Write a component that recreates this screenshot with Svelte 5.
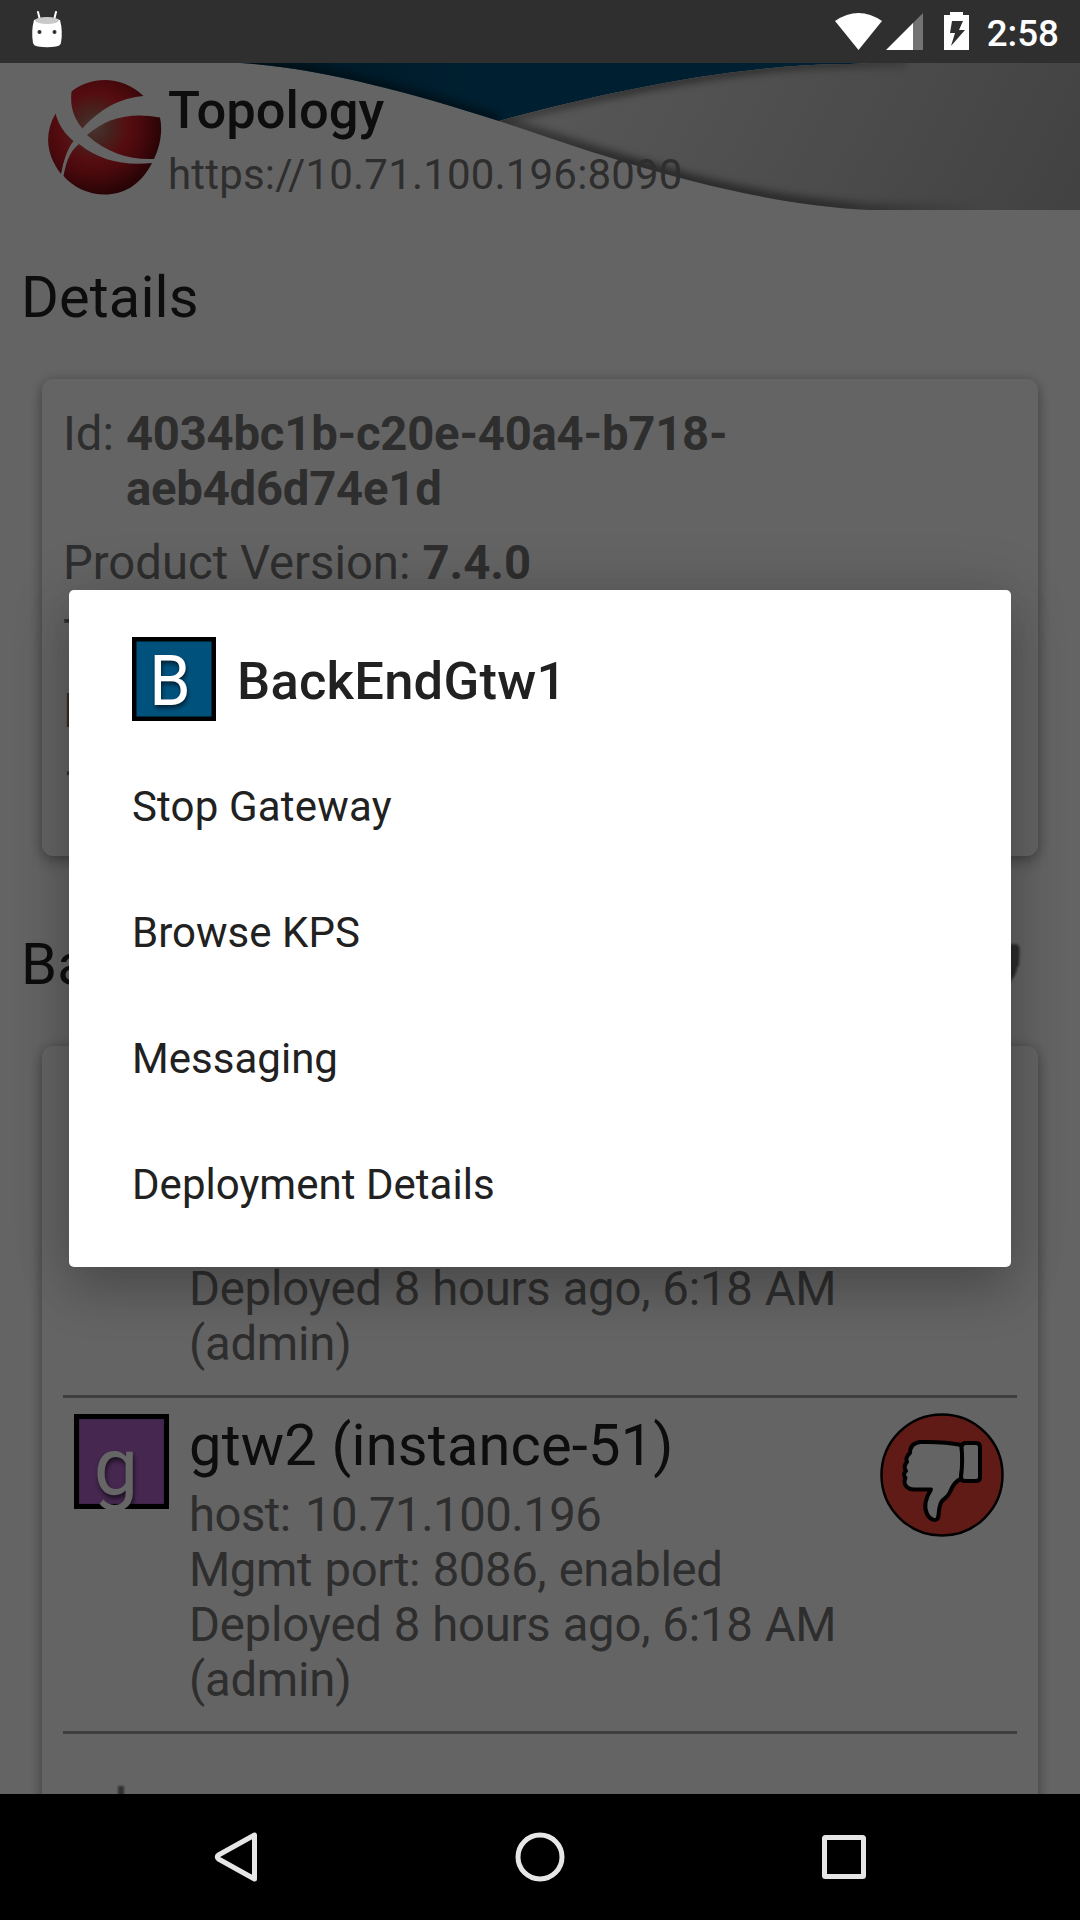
<script>
  const details = [
    { label: 'Id:', lines: ['4034bc1b-c20e-40a4-b718-', 'aeb4d6d74e1d'] },
    { label: 'Product Version:', lines: ['7.4.0'] },
    { label: 'T', lines: [] },
    { label: 'H', lines: [] },
    { label: '1', lines: [] }
  ];

  const gateways = [
    { letter: '', color: '#005480', name: '', lines: ['', '', 'Deployed 8 hours ago, 6:18 AM', '(admin)'] },
    {
      letter: 'g',
      color: '#ad62c6',
      name: 'gtw2 (instance-51)',
      lines: ['host: 10.71.100.196', 'Mgmt port: 8086, enabled', 'Deployed 8 hours ago, 6:18 AM', '(admin)']
    }
  ];

  const actions = ['Stop Gateway', 'Browse KPS', 'Messaging', 'Deployment Details'];
</script>

<div class="screen">
  <main class="app">
    <header class="header">
      <svg class="swoosh" viewBox="0 0 1080 147" width="1080" height="147" aria-hidden="true">
        <defs>
          <linearGradient id="grey" gradientUnits="userSpaceOnUse" x1="560" y1="0" x2="1010" y2="240">
            <stop offset="0" stop-color="#dadada" />
            <stop offset="1" stop-color="#a6a6a6" />
          </linearGradient>
          <linearGradient id="blue" x1="0" y1="0" x2="1" y2="0">
            <stop offset="0" stop-color="#003a58" />
            <stop offset=".4" stop-color="#00507a" />
            <stop offset="1" stop-color="#005480" />
          </linearGradient>
          <linearGradient id="fade" gradientUnits="userSpaceOnUse" x1="480" y1="0" x2="990" y2="0">
            <stop offset="0" stop-color="#505050" stop-opacity=".5" />
            <stop offset=".3" stop-color="#484848" stop-opacity=".8" />
            <stop offset=".7" stop-color="#505050" stop-opacity=".75" />
            <stop offset="1" stop-color="#707070" stop-opacity="0" />
          </linearGradient>
          <filter id="soft" x="-10%" y="-30%" width="120%" height="160%"><feGaussianBlur stdDeviation="4.500" /></filter>
          <clipPath id="greyClip"><path d="M499 58C590 33 730 1 850 1L870 0H1080V147H870C730 140 590 88 499 58Z" /></clipPath>
          <clipPath id="blueClip"><path d="M240 0C318 5 405 28 499 58C590 33 730 1 850 1L870 0Z" /></clipPath>
        </defs>
        <g clip-path="url(#blueClip)">
          <rect x="200" width="700" height="147" fill="url(#blue)" />
          <path d="M240 0C318 5 405 28 499 58" fill="none" stroke="#001c2c" stroke-width="11" opacity=".7" filter="url(#soft)" />
        </g>
        <g clip-path="url(#greyClip)">
          <rect x="480" width="600" height="147" fill="url(#grey)" />
          <path d="M480 63C590 33 730 1 850 0H908" fill="none" stroke="url(#fade)" stroke-width="8" filter="url(#soft)" />
          <path d="M480 52C590 88 730 140 870 147H980" fill="none" stroke="url(#fade)" stroke-width="13" filter="url(#soft)" />
        </g>
      </svg>
      <div class="brand">
        <svg class="logo" viewBox="0 0 116 116" width="116" height="116" aria-hidden="true">
          <defs>
            <radialGradient id="ball" gradientUnits="userSpaceOnUse" cx="47" cy="48" r="78">
              <stop offset="0" stop-color="#b4887a" />
              <stop offset=".2" stop-color="#ae5a50" />
              <stop offset=".43" stop-color="#d4222a" />
              <stop offset=".6" stop-color="#b81820" />
              <stop offset=".85" stop-color="#6c0c12" />
              <stop offset="1" stop-color="#50080c" />
            </radialGradient>
          </defs>
          <g fill="url(#ball)">
            <path d="M24.500 12.500C45 -4 76 -3 96.500 17C72 19 52 31 35.500 49.500C26 38 23 27 24.500 12.500Z" />
            <path d="M40 56C60 38 85 33 113 38.500C116 53 113 67 107 80C83 81 60 74 40 56Z" />
            <path d="M8.500 34.500C12 47 18 55 26.500 62C21 69 18 78 15.500 88L14 95C-1 75 -3 55 8.500 34.500Z" />
            <path d="M32 65C52 81 76 87 105 84C93 107 76 115.500 58 115.500C41 115.500 26 108 16.500 97C19 84 22 73 32 65Z" />
          </g>
        </svg>
        <div class="titles">
          <h1>Topology</h1>
          <p>https://10.71.100.196:8090</p>
        </div>
      </div>
    </header>

    <h2 class="first">Details</h2>
    <section class="card details">
      {#each details as row}
        <div class="row">
          <span>{row.label}</span>
          {#if row.lines.length}
            <strong>{#each row.lines as line}<span class="line">{line}</span>{/each}</strong>
          {/if}
        </div>
      {/each}
    </section>

    <div class="group">
      <h2>Ba</h2>
      <svg width="30" height="50" viewBox="0 0 30 50" aria-hidden="true"><path d="M0 2H24Q29 2 28.500 9L28 23C25 26 26 32 22 36L16 46H0Z" fill="#6d6d6d" /></svg>
    </div>
    <section class="card list">
      {#each gateways as gw}
        <article>
          <svg class="tile" viewBox="0 0 84 84" width="95" height="95" aria-hidden="true">
            <rect width="84" height="84" fill="#000" />
            <rect x="4.500" y="4.500" width="75" height="75" fill={gw.color} />
            <text x="17.500" y="71" class="glyph">{gw.letter}</text>
          </svg>
          <div class="info">
            <h3>{gw.name}</h3>
            {#each gw.lines as line}<p>{line}</p>{/each}
          </div>
          <svg class="thumb" viewBox="0 0 124 124" width="124" height="124" aria-hidden="true">
            <circle cx="62" cy="62" r="60.500" fill="#f2443a" stroke="#000" stroke-width="2.500" />
            <g fill="#fafafa" stroke="#000" stroke-width="4" stroke-linejoin="round">
              <path d="M81.500 32C72 30 60 28.500 40 29C33 30 30 34 30 40C26.500 43 25.500 46 27 49C24 52 24 55 26 58C23.500 60 23.500 63 25.500 65C22.500 71 27 76.500 34 76.500H51C44.500 87 44 95 47 101C50 107 56 108.500 58 105C59.500 98 58.500 93 62 88C66 84 68 84 70 79C72 74 75 68 81 66Q83.500 48 81.500 32Z" />
              <path d="M81.500 34Q82 30 86 30H96Q100 30 100 34V64Q100 68 96 68H85Q81 68 81 64Q83 48 81.500 34Z" />
            </g>
          </svg>
        </article>
      {/each}
      <div class="peek"></div>
    </section>
  </main>

  <div class="scrim">
    <div class="dialog" role="dialog" aria-label="BackEndGtw1">
      <div class="dialog-title">
        <svg viewBox="0 0 84 84" width="84" height="84" aria-hidden="true">
          <rect width="84" height="84" fill="#000" />
          <rect x="4.500" y="4.500" width="75" height="75" fill="#00527d" />
          <text x="15" y="68" class="glyph">B</text>
        </svg>
        <span>BackEndGtw1</span>
      </div>
      {#each actions as action}
        <div class="action">{action}</div>
      {/each}
    </div>
  </div>

  <div class="status">
    <svg class="droid" width="32" height="38" viewBox="0 0 32 38" aria-hidden="true">
      <path d="M7 1L9 9M25 1L23 9" stroke="#fff" stroke-width="2" stroke-linecap="round" />
      <path d="M3 9Q16 4 29 9Q32 20 30 32Q29 35 25 35.500Q16 37 7 35.500Q3 35 2 32Q0 20 3 9Z" fill="#fff" />
      <ellipse cx="16" cy="9.500" rx="12" ry="3.500" fill="#c9c9c9" />
      <circle cx="8.500" cy="21" r="2" fill="#2f2f2f" /><circle cx="23.500" cy="21" r="2" fill="#2f2f2f" />
    </svg>
    <div class="tray">
      <svg width="47" height="37" viewBox="0 0 47 37" aria-hidden="true"><path d="M0 8Q23.500 -8 47 8L23.500 37Z" fill="#fff" /></svg>
      <svg class="signal" width="37" height="37" viewBox="0 0 37 37" aria-hidden="true"><path d="M37 0V37H26V11Z" fill="#737373" /><path d="M0 37L27 10V37Z" fill="#fff" /></svg>
      <svg class="battery" width="25" height="38" viewBox="0 0 25 38" aria-hidden="true"><path d="M0 3H6V0H19V3H25V38H0Z" fill="#fff" /><path d="M8 9H19L15 18H21L7 34L11 21H6Z" fill="#2f2f2f" /></svg>
      <span>2:58</span>
    </div>
  </div>

  <nav class="nav">
    <svg viewBox="0 0 1080 126" width="1080" height="126" fill="none" stroke="#e6e6e6" stroke-width="5" stroke-linejoin="round" aria-hidden="true">
      <path d="M254.500 41V85L218.500 65Q216 63 218.500 61Z" />
      <circle cx="540" cy="63" r="22" />
      <rect x="824.500" y="43.500" width="39" height="39" rx="1" />
    </svg>
  </nav>
</div>

<style>
  :global(body) { margin: 0; }
  .screen {
    display: grid;
    grid-template: 63px 1731px 126px / 1080px;
    width: 1080px;
    height: 1920px;
    overflow: hidden;
    background: #fafafa;
    font-family: Roboto, "Liberation Sans", sans-serif;
    color: #212121;
  }
  h1, h2, h3, p { margin: 0; font-weight: 400; }
  svg { display: block; flex: none; }

  .status {
    grid-area: 1 / 1;
    z-index: 2;
    display: flex;
    justify-content: space-between;
    padding: 11px 21px 0 31px;
    background: #2f2f2f;
    color: #fff;
  }
  .tray { display: flex; align-items: flex-start; padding-top: 1.500px; }
  .signal { margin-left: 4px; }
  .battery { margin-left: 21px; margin-top: -.500px; }
  .tray span { margin-left: 18px; font-size: 36.750px; font-weight: 500; line-height: 41px; white-space: nowrap; }

  .app { grid-area: 2 / 1; overflow: hidden; }
  .header { display: grid; height: 147px; }
  .swoosh, .brand { grid-area: 1 / 1; }
  .brand { display: flex; padding: 16px 0 0 47px; }
  .titles { padding: 1px 0 0 5px; }
  .titles h1 { font-size: 52.500px; font-weight: 500; line-height: 61px; }
  .titles p { margin-top: 9px; font-size: 42px; line-height: 49px; letter-spacing: .180px; color: #737373; }

  h2 { padding-left: 21px; font-size: 57.750px; line-height: 68px; letter-spacing: .150px; }
  .first { margin-top: 53px; }
  .group { display: flex; justify-content: space-between; align-items: flex-start; margin-top: 74px; padding-right: 59px; }
  .group svg { margin-top: 12px; filter: blur(1px); }
  .card {
    box-sizing: border-box;
    margin: 48px 42px 0;
    border-radius: 11px;
    background: #fbfbfb;
    box-shadow: 0 7px 14px rgba(0, 0, 0, .24), 0 0 12px rgba(0, 0, 0, .18);
    color: #737373;
    font-size: 47.250px;
    line-height: 55px;
  }
  .details { display: flex; flex-direction: column; gap: 19px; height: 477px; padding: 28px 21px 0; }
  .row { display: flex; gap: 12px; white-space: nowrap; }
  .line { display: block; }
  strong { font-weight: 700; }
  .row:first-child strong { letter-spacing: -.220px; }

  .list { height: 800px; padding: 16px 21px 0; }
  article {
    box-sizing: border-box;
    display: flex;
    height: 336px;
    padding: 13px 13px 0 11px;
    border-bottom: 3px solid #9b9b9b;
  }
  .tile { margin-top: 3px; }
  .glyph { font-family: Roboto, sans-serif; font-size: 70px; fill: #fff; filter: drop-shadow(1px 3px 2px rgba(0, 0, 0, .6)); }
  .info { flex: 1; padding-left: 20px; white-space: nowrap; }
  .info h3 { height: 68px; margin-bottom: 9px; font-size: 57.750px; line-height: 68px; letter-spacing: .200px; color: #212121; }
  .info p { height: 55px; letter-spacing: -.220px; word-spacing: .600px; }
  .info h3 + p { letter-spacing: -.500px; word-spacing: 3px; }
  .info h3 + p + p { letter-spacing: -.400px; word-spacing: 1.200px; }
  .thumb { margin-top: 2px; }
  .peek { width: 6px; height: 20px; margin: 52px 0 0 55px; background: #777; filter: blur(1px); }

  .scrim { grid-area: 1 / 1 / 3 / 2; z-index: 1; display: flex; align-items: flex-start; justify-content: center; padding-top: 590px; background: rgba(0, 0, 0, .6); }
  .dialog {
    box-sizing: border-box;
    width: 942px;
    height: 677px;
    padding: 47px 63px 0;
    border-radius: 5px;
    background: #fff;
    box-shadow: 0 26px 50px rgba(0, 0, 0, .18), 0 0 60px rgba(0, 0, 0, .15);
  }
  .dialog-title { display: flex; align-items: center; gap: 21px; height: 84px; margin-bottom: 23px; font-size: 52.500px; font-weight: 500; letter-spacing: .250px; white-space: nowrap; }
  .dialog-title span { padding-top: 3px; }
  .dialog-title .glyph { font-weight: 400; letter-spacing: 0; transform: translateX(3px) scaleX(.95); }
  .action { height: 126px; font-size: 42px; line-height: 126px; letter-spacing: .030px; white-space: nowrap; }
  .dialog-title + .action { letter-spacing: .170px; }

  .nav { grid-area: 3 / 1; background: #000; }
</style>
